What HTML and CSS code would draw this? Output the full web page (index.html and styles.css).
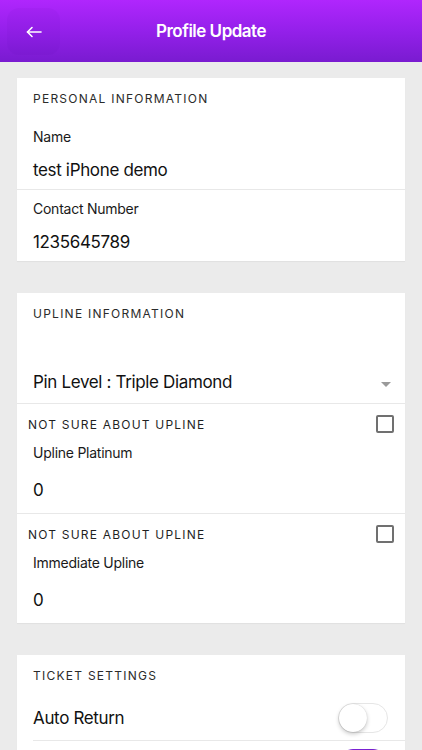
FILE: index.html
```html
<!DOCTYPE html>
<html lang="en">
<head>
    <meta charset="UTF-8">
    <meta name="viewport" content="width=device-width, initial-scale=1.0">
    <title>Profile Update</title>
    <link rel="stylesheet" href="styles.css">
</head>
<body>

    <header class="topBar">
        <button class="backButton" type="button" aria-label="Back">
            <svg width="16" height="12" viewBox="0 0 16 12" fill="none" stroke="#fff" stroke-width="1.6" stroke-linecap="round" stroke-linejoin="round">
                <path d="M15 6H1.5"/>
                <path d="M6 1.5L1.5 6L6 10.5"/>
            </svg>
        </button>
        <h1 class="pageTitle">Profile Update</h1>
    </header>

    <main class="content">

        <section class="card">
            <h2 class="sectionTitle">Personal Information</h2>
            <div class="field">
                <div class="fieldLabel">Name</div>
                <div class="fieldValue">test iPhone demo</div>
            </div>
            <div class="field">
                <div class="fieldLabel">Contact Number</div>
                <div class="fieldValue">1235645789</div>
            </div>
        </section>

        <section class="card">
            <h2 class="sectionTitle">Upline Information</h2>
            <div class="selectRow">
                <span class="fieldValue">Pin Level : Triple Diamond</span>
                <span class="caret"></span>
            </div>
            <div class="uplineBlock">
                <div class="checkRow">
                    <span class="checkText">Not sure about upline</span>
                    <span class="checkBox"></span>
                </div>
                <div class="fieldLabel">Upline Platinum</div>
                <div class="fieldValue">0</div>
            </div>
            <div class="uplineBlock">
                <div class="checkRow">
                    <span class="checkText">Not sure about upline</span>
                    <span class="checkBox"></span>
                </div>
                <div class="fieldLabel">Immediate Upline</div>
                <div class="fieldValue">0</div>
            </div>
        </section>

        <section class="card">
            <h2 class="sectionTitle">Ticket Settings</h2>
            <div class="toggleRow">
                <span class="toggleLabel">Auto Return</span>
                <span class="toggle"></span>
            </div>
            <div class="toggleRow">
                <span class="toggleLabel"></span>
                <span class="toggle on"></span>
            </div>
        </section>

    </main>

</body>
</html>
```

FILE: styles.css
```css
body {
    font-family: Inter, 'Noto Sans', sans-serif;
    margin: 0;
    background-color: #ebebeb;
    color: #111;
}

.topBar {
    height: 62px;
    display: flex;
    align-items: center;
    justify-content: center;
    position: relative;
    background: linear-gradient(180deg, #b026fd 0%, #9420ea 50%, #791bd0 100%);
}

.backButton {
    position: absolute;
    left: 7px;
    top: 8px;
    width: 53px;
    height: 47px;
    border: none;
    border-radius: 12px;
    background-color: rgba(60, 0, 120, 0.04);
    display: flex;
    align-items: center;
    justify-content: center;
    padding: 0;
    cursor: pointer;
}

.pageTitle {
    margin: 0;
    color: #fff;
    font-size: 17px;
    font-weight: 600;
    letter-spacing: -0.5px;
}

.content {
    padding: 16px 17px;
    display: flex;
    flex-direction: column;
    gap: 32px;
}

.card {
    background-color: #fff;
    box-shadow: 0 1px 1px rgba(0, 0, 0, 0.04);
}

.sectionTitle {
    margin: 0;
    height: 40px;
    line-height: 41px;
    padding: 0 16px;
    font-size: 12px;
    font-weight: 400;
    letter-spacing: 1.25px;
    text-transform: uppercase;
    color: #2b2b2b;
}

.field {
    padding: 10px 16px 8px;
    border-bottom: 1px solid #e8e8e8;
}

.field:last-child {
    border-bottom: none;
}

.fieldLabel {
    font-size: 14px;
    line-height: 18px;
    letter-spacing: -0.25px;
    color: #1a1a1a;
}

.fieldValue {
    display: block;
    font-size: 17px;
    line-height: 22px;
    letter-spacing: -0.35px;
    margin-top: 13px;
    color: #111;
}

.selectRow {
    display: flex;
    align-items: center;
    justify-content: space-between;
    padding: 38px 14px 10px 16px;
    border-bottom: 1px solid #e8e8e8;
}

.selectRow .fieldValue {
    margin-top: 0;
}

.caret {
    width: 0;
    height: 0;
    border-left: 5px solid transparent;
    border-right: 5px solid transparent;
    border-top: 5px solid #9a9a9a;
    margin-top: 4px;
}

.uplineBlock {
    padding: 10px 11px 12px 16px;
    border-bottom: 1px solid #e8e8e8;
}

.uplineBlock:last-child {
    border-bottom: none;
}

.checkRow {
    height: 20px;
    display: flex;
    align-items: center;
    justify-content: space-between;
    margin-left: -5px;
    margin-bottom: 10px;
}

.checkText {
    font-size: 12px;
    letter-spacing: 1.2px;
    text-transform: uppercase;
    color: #1f1f1f;
}

.checkBox {
    width: 14px;
    height: 14px;
    border: 2px solid #707070;
    border-radius: 2px;
}

.uplineBlock .fieldValue {
    margin-top: 17px;
}

.toggleRow {
    height: 45px;
    display: flex;
    align-items: center;
    justify-content: space-between;
    margin-left: 16px;
    padding-right: 17px;
    border-bottom: 1px solid #e8e8e8;
}

.toggleLabel {
    font-size: 17px;
    letter-spacing: -0.35px;
    color: #111;
}

.toggle {
    width: 50px;
    height: 30px;
    box-sizing: border-box;
    border: 1px solid #e6e6e6;
    border-radius: 15px;
    background-color: #fff;
    position: relative;
}

.toggle::after {
    content: "";
    position: absolute;
    left: 0;
    top: 0;
    width: 28px;
    height: 28px;
    border-radius: 50%;
    background-color: #fff;
    box-shadow: 0 2px 4px rgba(0, 0, 0, 0.22), 0 0 1px rgba(0, 0, 0, 0.2);
}

.toggle.on {
    background-color: #7a22d4;
    border-color: #7a22d4;
}

.toggle.on::after {
    left: 20px;
}
```
